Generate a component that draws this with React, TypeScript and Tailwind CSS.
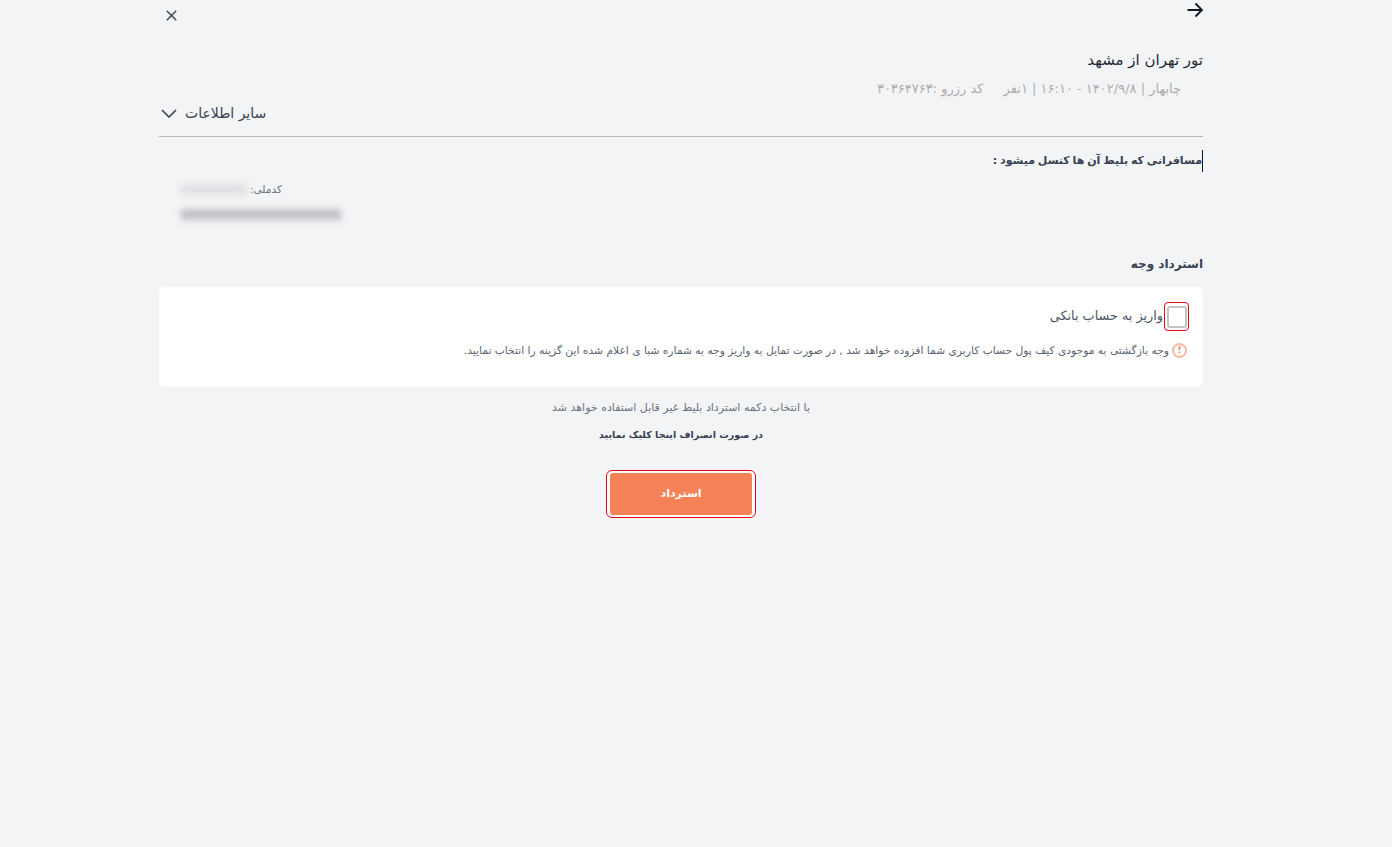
import { X } from "lucide-react";

export default function App() {
  return (
    <div dir="rtl" className="min-h-[847px] bg-[#f3f4f6] pr-[189px] font-['DejaVu_Sans',sans-serif] text-[#374151]">
      <div className="w-[1044px]">
        {/* Top bar */}
        <div className="flex h-[24px] items-start justify-between">
          <svg className="mt-[2px] h-[16px] w-[16px] text-[#111827]" viewBox="0 0 16 16" fill="none" stroke="currentColor" strokeWidth="1.9">
            <path d="M0.5 8H15M8.5 1.5 15 8 8.5 14.5" />
          </svg>
          <X className="ml-[4px] mt-[7px] h-[17px] w-[17px] text-[#4b5563]" strokeWidth={2.4} />
        </div>

        {/* Tour info */}
        <h1 className="mt-[25px] text-[15px] leading-[22px] text-[#1f2937]">تور تهران از مشهد</h1>
        <div className="mt-[10px] flex gap-[20px] pr-[22px] text-[13px] leading-[16px] text-[#adadad]">
          <span>چابهار | ۱۴۰۲/۹/۸ - ۱۶:۱۰ | ۱نفر</span>
          <span>کد رزرو :۳۰۳۶۴۷۶۳</span>
        </div>

        {/* Other info accordion */}
        <div className="flex h-[40px] items-center justify-end gap-[8px] border-b border-[#b5b6b8] pb-[6px] pl-[2px]">
          <span className="text-[14px] text-[#374151]">سایر اطلاعات</span>
          <svg className="h-[9px] w-[16px] text-[#374151]" viewBox="0 0 16 9" fill="none" stroke="currentColor" strokeWidth="1.6">
            <path d="M1 1 8 8 15 1" />
          </svg>
        </div>

        {/* Passengers */}
        <h2 className="mt-[13px] h-[22px] border-r border-[#111827] text-[11px] font-bold leading-[22px] text-[#374151] [word-spacing:-1px]">
          مسافرانی که بلیط آن ها کنسل میشود :
        </h2>
        <div className="mt-[10px] flex flex-col items-end pl-[22px]">
          <div className="flex w-[160px] items-center justify-end gap-[3px]">
            <span className="text-[10.5px] leading-[14px] text-[#6b7280]">کدملی:</span>
            <div className="h-[11px] w-[66px] bg-[#e0e1e4] blur-[3px]" />
          </div>
          <div className="mt-[13px] h-[11px] w-[160px] bg-[#c0c2c7] blur-[3px]" />
        </div>

        {/* Refund */}
        <h2 className="mt-[34px] text-[12px] font-bold leading-[20px] text-[#374151]">استرداد وجه</h2>
        <div className="mt-[13px] h-[100px] rounded-[6px] bg-white pr-[14px] pt-[15px]">
          <label className="flex items-center gap-[1px]">
            <span className="flex h-[29px] w-[25px] items-center justify-center rounded-[4px] border border-[#e30613]">
              <span className="h-[22px] w-[20px] rounded-[3px] border-2 border-[#c4c4c4] bg-white" />
            </span>
            <span className="-mt-[2px] text-[12.8px] text-[#4b5563]">واریز به حساب بانکی</span>
          </label>
          <div className="mt-[12px] flex items-center gap-[3px] pr-[2px]">
            <span className="flex h-[15px] w-[15px] items-center justify-center rounded-full border-2 border-[#f9b9a0] text-[9px] font-bold leading-none text-[#f58257]">!</span>
            <p className="text-[10.7px] leading-[14px] text-[#5b6472]">
              وجه بازگشتی به موجودی کیف پول حساب کاربری شما افزوده خواهد شد , در صورت تمایل به واریز وجه به شماره شبا ی اعلام شده این گزینه را انتخاب نمایید.
            </p>
          </div>
        </div>

        {/* Confirm */}
        <div className="flex flex-col items-center">
          <p className="mt-[14px] text-[11px] leading-[14px] text-[#6b7280]">با انتخاب دکمه استرداد بلیط غیر قابل استفاده خواهد شد</p>
          <p className="mt-[13px] text-[9.5px] font-bold leading-[14px] text-[#374151]">در صورت انصراف اینجا کلیک نمایید</p>
          <button className="mt-[28px] h-[48px] w-[150px] rounded-[6px] border border-[#e30613] bg-white px-[3px] py-[2px]">
            <span className="flex h-full w-full items-center justify-center rounded-[3px] bg-[#f58257] text-[11px] font-bold text-white">استرداد</span>
          </button>
        </div>
      </div>
    </div>
  );
}
